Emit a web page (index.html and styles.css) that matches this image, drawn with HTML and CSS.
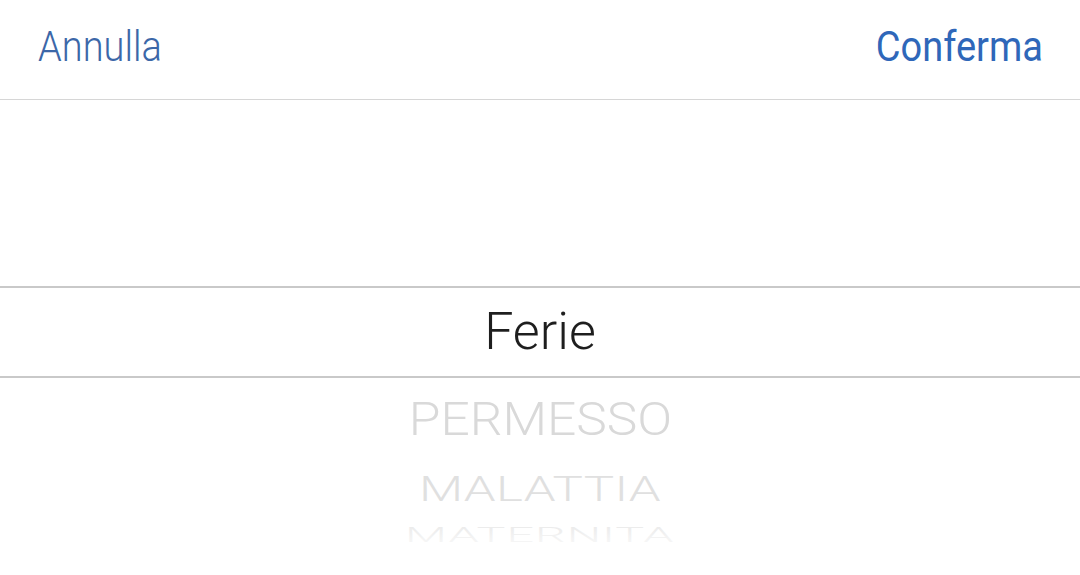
FILE: index.html
```html
<!DOCTYPE html>
<html lang="it">
<head>
<meta charset="utf-8">
<title>Picker</title>
<link rel="stylesheet" href="styles.css">
</head>
<body>
<div class="sheet">
  <header class="toolbar">
    <span class="btn btn-cancel">Annulla</span>
    <span class="btn btn-confirm">Conferma</span>
  </header>
  <div class="picker">
    <div class="spacer"></div>
    <div class="row row-selected"><span class="label">Ferie</span></div>
    <div class="row row-1"><span class="label">PERMESSO</span></div>
    <div class="row row-2"><span class="label">MALATTIA</span></div>
    <div class="row row-3"><span class="label">MATERNITA</span></div>
    <div class="fade"></div>
  </div>
</div>
</body>
</html>
```
FILE: styles.css
```css
html, body {
  margin: 0;
  padding: 0;
  background: #ffffff;
}
body {
  width: 1080px;
  height: 575px;
  overflow: hidden;
  font-family: Roboto, "Liberation Sans", sans-serif;
}
.sheet {
  display: flex;
  flex-direction: column;
  height: 575px;
}
.toolbar {
  height: 93px;
  padding: 0 37px 6px 38px;
  border-bottom: 1px solid #d6d6d6;
  display: flex;
  justify-content: space-between;
  align-items: center;
  box-sizing: content-box;
}
.btn {
  font-size: 38px;
  line-height: 1;
  display: inline-block;
  transform: scaleY(1.1);
}
.btn-cancel {
  font-weight: 300;
  color: #3c67a8;
}
.btn-confirm {
  font-weight: 400;
  color: #2f67b9;
}
.picker {
  position: relative;
  flex: 1;
  display: flex;
  flex-direction: column;
}
.spacer {
  height: 186px;
}
.row {
  display: flex;
  justify-content: center;
  align-items: center;
  font-weight: 300;
  font-size: 51px;
  line-height: 1;
}
.label {
  display: inline-block;
}
.row-selected {
  height: 88px;
  border-top: 2px solid #c9c9c9;
  border-bottom: 2px solid #c9c9c9;
  color: #1e1e1e;
  font-size: 52px;
}
.row-1 {
  height: 80px;
  color: #d9d9d9;
}
.row-1 .label {
  transform: scale(1.01, 0.92);
}
.row-2 {
  height: 62px;
  color: #e0e0e0;
}
.row-2 .label {
  letter-spacing: 0.3px;
  transform: scale(1.0, 0.68);
}
.row-3 {
  height: 30px;
  color: #e4e4e4;
}
.row-3 .label {
  letter-spacing: 1px;
  transform: scale(0.95, 0.39);
}
.fade {
  position: absolute;
  left: 0;
  right: 0;
  bottom: 0;
  height: 60px;
  background: linear-gradient(to bottom, rgba(255,255,255,0) 0%, rgba(255,255,255,0.6) 40%, #ffffff 75%);
  pointer-events: none;
}
```
